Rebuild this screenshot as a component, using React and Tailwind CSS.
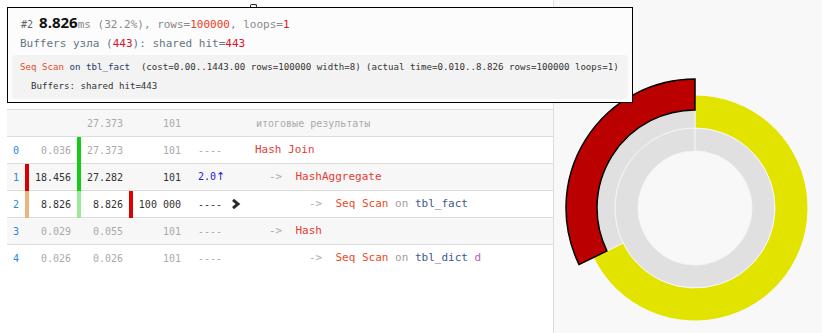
import React from "react";

const MONO = "font-['DejaVu_Sans_Mono',monospace]";

function seg(cx, cy, r0, r1, a0, a1) {
  const p = (r, a) => {
    const t = (a * Math.PI) / 180;
    return `${(cx + r * Math.sin(t)).toFixed(3)} ${(cy - r * Math.cos(t)).toFixed(3)}`;
  };
  const large = a1 - a0 > 180 ? 1 : 0;
  return `M ${p(r1, a0)} A ${r1} ${r1} 0 ${large} 1 ${p(r1, a1)} L ${p(r0, a1)} A ${r0} ${r0} 0 ${large} 0 ${p(r0, a0)} Z`;
}

function Chevron() {
  return (
    <svg width="10" height="12" viewBox="0 0 10 12" className="ml-[9px]">
      <polyline points="2,1.8 7,6 2,10.2" fill="none" stroke="#2b2b2b" strokeWidth="3" strokeLinejoin="miter" strokeLinecap="butt" />
    </svg>
  );
}

function Arrow() {
  return <span className="text-[#aaa]">{"->  "}</span>;
}

const rows = [
  {
    n: "0", bar1: "", b: "0.036", bar2: "bg-[#14cc14]", c: "27.373", bar3: "", d: "101",
    e: "----", eCls: "text-[#aaa]", val: "text-[#aaa]", bg: "bg-white", pad: "pl-0", chev: false,
    name: <span className="text-[#e63b32]">Hash Join</span>,
  },
  {
    n: "1", bar1: "bg-[#d60000]", b: "18.456", bar2: "bg-[#14cc14]", c: "27.282", bar3: "", d: "101",
    e: (<>2.0<span className="font-['DejaVu_Sans',sans-serif] text-[11px]">↑</span></>), eCls: "text-[#1c1cd2]", val: "text-[#333]", bg: "bg-[#f7f7f7]", pad: "pl-[14px]", chev: false,
    name: (<><Arrow /><span className="text-[#e63b32]">HashAggregate</span></>),
  },
  {
    n: "2", bar1: "bg-[#eab47c]", b: "8.826", bar2: "bg-[#9ce99c]", c: "8.826", bar3: "bg-[#dd0000]", d: "100 000",
    e: "----", eCls: "text-[#333]", val: "text-[#333]", bg: "bg-white", pad: "pl-[54px]", chev: true,
    name: (<><Arrow /><span className="text-[#ea4a1e]">Seq Scan</span><span className="text-[#a0a0a0]"> on </span><span className="text-[#3b5a8e]">tbl_fact</span></>),
  },
  {
    n: "3", bar1: "", b: "0.029", bar2: "", c: "0.055", bar3: "", d: "101",
    e: "----", eCls: "text-[#aaa]", val: "text-[#aaa]", bg: "bg-[#f7f7f7]", pad: "pl-[14px]", chev: false,
    name: (<><Arrow /><span className="text-[#e63b32]">Hash</span></>),
  },
  {
    n: "4", bar1: "", b: "0.026", bar2: "", c: "0.026", bar3: "", d: "101",
    e: "----", eCls: "text-[#aaa]", val: "text-[#aaa]", bg: "bg-white", pad: "pl-[54px]", chev: false, last: true,
    name: (<><Arrow /><span className="text-[#ea4a1e]">Seq Scan</span><span className="text-[#a0a0a0]"> on </span><span className="text-[#3b5a8e]">tbl_dict</span><span className="text-[#b65cc4]"> d</span></>),
  },
];

function Row({ r }) {
  return (
    <div className={`flex h-[27px] items-center ${r.last ? "" : "border-b border-[#dcdcdc]"} ${r.bg}`}>
      <div className="w-[18px] pl-[6px] text-[10px] text-[#2b88d8]">{r.n}</div>
      <div className={`w-[4px] self-stretch -mb-px ${r.bar1}`} />
      <div className={`w-[48px] pr-[6px] text-right text-[10px] ${r.val}`}>{r.b}</div>
      <div className={`w-[4px] self-stretch -mb-px ${r.bar2}`} />
      <div className={`w-[48px] pr-[6px] text-right text-[10px] ${r.val}`}>{r.c}</div>
      <div className={`w-[4px] self-stretch -mb-px ${r.bar3}`} />
      <div className={`w-[54px] pr-[6px] text-right text-[10px] whitespace-pre ${r.val}`}>{r.d}</div>
      <div className={`w-[68px] pl-[11px] flex items-center text-[10px] ${r.eCls}`}>
        <span>{r.e}</span>
        {r.chev && <Chevron />}
      </div>
      <div className={`flex-1 text-[11px] whitespace-pre ${r.pad}`}>{r.name}</div>
    </div>
  );
}

export default function App() {
  const cx = 141;
  const cy = 208;
  return (
    <div className={`relative flex w-[822px] h-[333px] overflow-hidden bg-white ${MONO}`}>
      {/* left panel: table */}
      <div className="w-[554px] shrink-0 border-r border-[#dddddd] bg-white flex flex-col">
        <div className="h-[109px] pl-[250px] pt-[4px]">
          <div className="w-[7px] h-[5px] border-[1.5px] border-b-0 border-[#222] rounded-t-[2px]" />
        </div>
        <div className="ml-[7px]">
          <div className="flex h-[28px] items-center border-t border-b border-[#dcdcdc] bg-[#f7f7f7]">
            <div className="w-[18px]" />
            <div className="w-[4px]" />
            <div className="w-[48px]" />
            <div className="w-[4px]" />
            <div className="w-[48px] pr-[6px] text-right text-[10px] text-[#aaa]">27.373</div>
            <div className="w-[4px]" />
            <div className="w-[54px] pr-[6px] text-right text-[10px] text-[#aaa]">101</div>
            <div className="w-[68px]" />
            <div className="flex-1 pl-[1px] text-[10px] text-[#aaa]">итоговые результаты</div>
          </div>
          {rows.map((r) => (
            <Row key={r.n} r={r} />
          ))}
        </div>
      </div>

      {/* right panel: sunburst */}
      <div className="flex-1 bg-[#f8f8f8]">
        <svg width="268" height="333" viewBox="0 0 268 333" className="block">
          <circle cx={cx} cy={cy} r="80" fill="#e0e0e0" stroke="#f4f4f4" strokeWidth="1" />
          <circle cx={cx} cy={cy} r="57" fill="#f8f8f8" stroke="#f4f4f4" strokeWidth="1" />
          <line x1={cx} y1={cy - 57} x2={cx} y2={cy - 80} stroke="#f4f4f4" strokeWidth="1.2" />
          <path d={seg(cx, cy, 80, 113, 0, 244)} fill="#e3e300" stroke="#f8f8f8" strokeWidth="1" />
          <path d={seg(cx, cy, 80, 113, 244, 360)} fill="#e0e0e0" stroke="#f4f4f4" strokeWidth="1" />
          <path d={seg(cx, cy, 98, 129, 244, 360)} fill="#bb0000" stroke="#000000" strokeWidth="1.5" />
        </svg>
      </div>

      {/* tooltip overlay */}
      <div className="absolute left-[7px] top-[7px] w-[626px] h-[96px] border border-black bg-[#fcfcfc] pt-[3px] pb-[3px]">
        <div className="h-[22px] leading-[22px] pl-[13px] whitespace-pre">
          <span className="text-[10px] text-[#666]">#2 </span>
          <span className="font-['Open_Sans',sans-serif] font-bold text-[15px] text-[#111]">8.826</span>
          <span className="text-[11px] text-[#8a8a8a]">ms (32.2%), rows=</span>
          <span className="text-[11px] text-[#ef3a1f]">100000</span>
          <span className="text-[11px] text-[#8a8a8a]">, loops=</span>
          <span className="text-[11px] text-[#e8102a]">1</span>
        </div>
        <div className="h-[22px] leading-[22px] pl-[12px] whitespace-pre text-[11px] text-[#657585]">
          <span>Buffers узла (</span>
          <span className="text-[#e0102a]">443</span>
          <span>): shared hit=</span>
          <span className="text-[#e0102a]">443</span>
        </div>
        <div className="mx-[4px] h-[44px] rounded-[4px] bg-[#f3f3f3] pt-[5px] pl-[8px] text-[9.15px] text-[#333] whitespace-pre">
          <div className="h-[14px] leading-[14px]">
            <span className="text-[#ea4a1e]">Seq Scan</span>
            <span className="text-[#1f3a66]"> on tbl_fact</span>
            <span>{"  (cost=0.00..1443.00 rows=100000 width=8) (actual time=0.010..8.826 rows=100000 loops=1)"}</span>
          </div>
          <div className="h-[14px] leading-[14px] mt-[5px] pl-[11px]">Buffers: shared hit=443</div>
        </div>
      </div>
    </div>
  );
}
